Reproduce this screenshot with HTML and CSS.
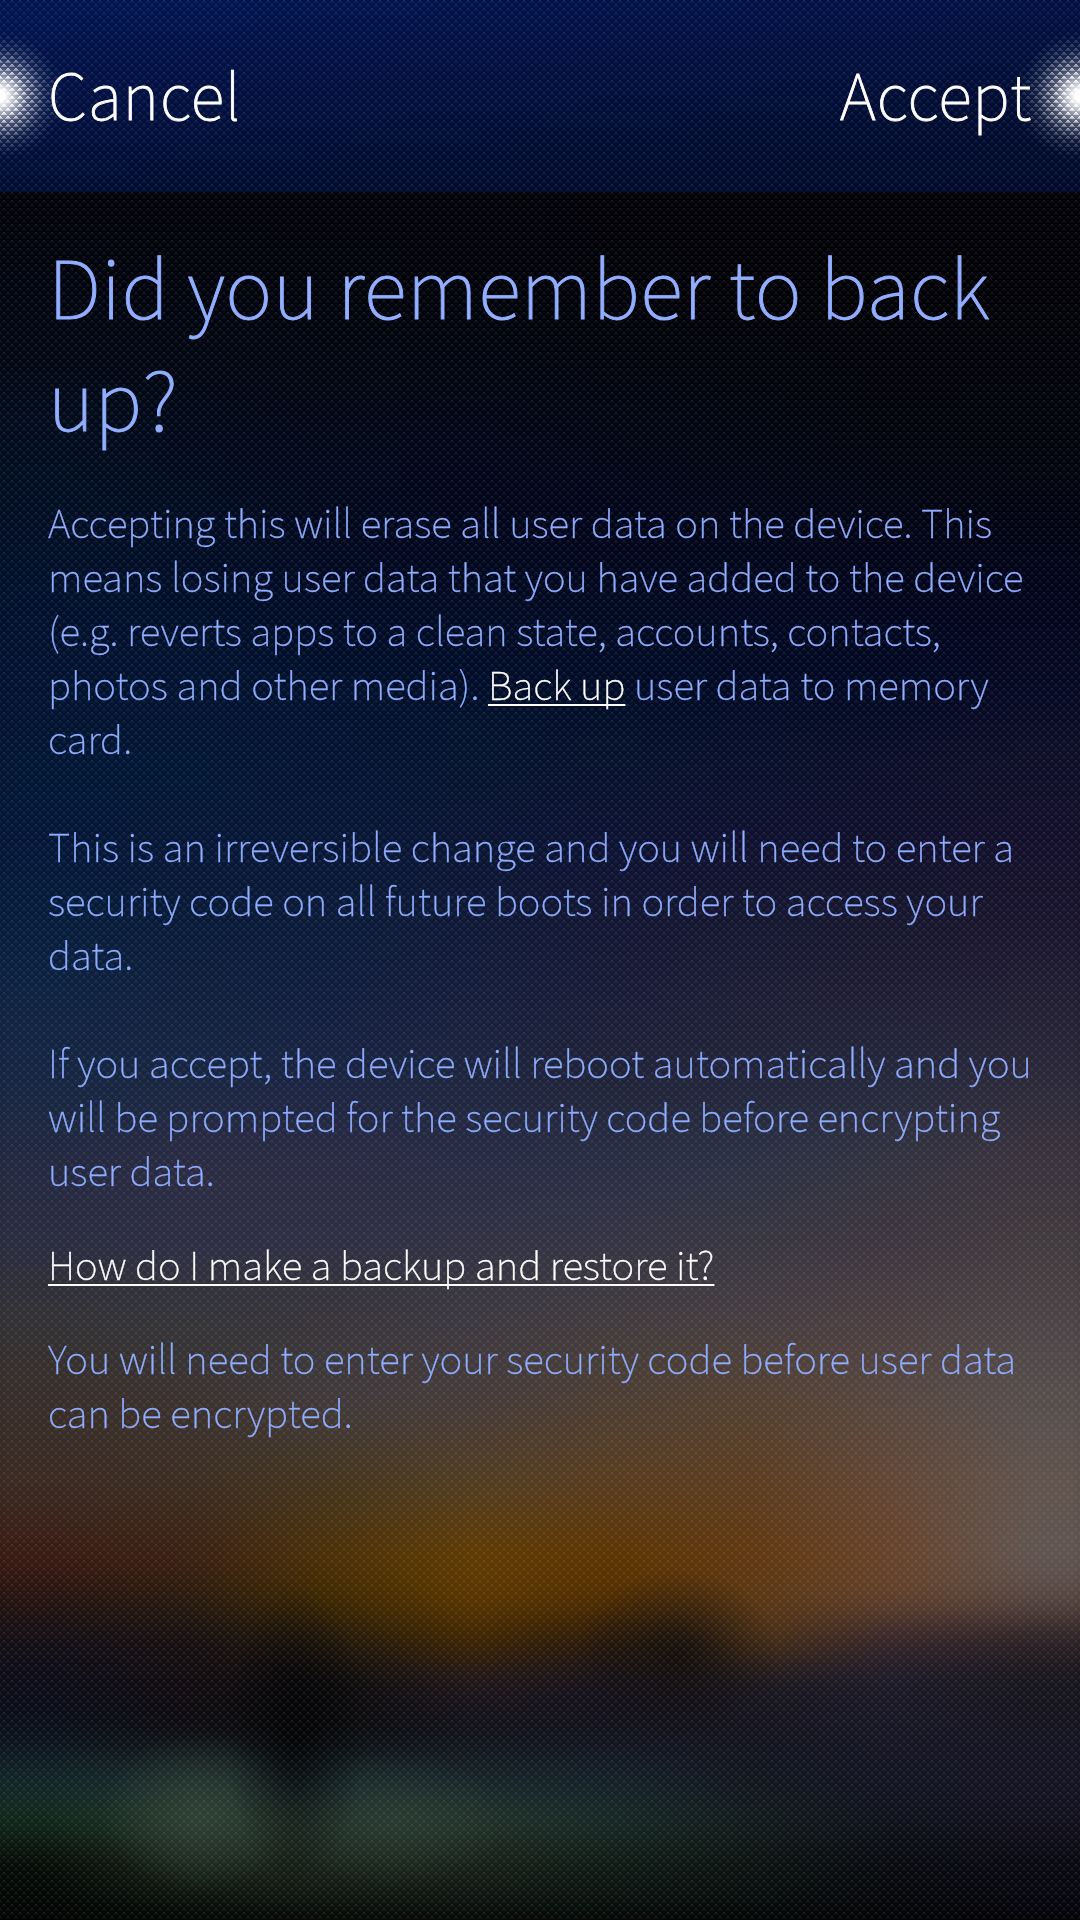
FILE: index.html
```
<!DOCTYPE html>
<html lang="en">
<head>
<meta charset="utf-8">
<title>Encrypt user data</title>
<link rel="stylesheet" href="styles.css">
</head>
<body>
<div class="wallpaper">
  <canvas id="ambience" width="1080" height="1920"></canvas>
  <div class="shade"></div>
  <div class="header-tint"></div>
  <div class="texture"></div>
</div>
<div class="page">
  <header class="dialog-header">
    <span class="glow glow-left"></span>
    <span class="glow glow-right"></span>
    <a class="action">Cancel</a>
    <a class="action">Accept</a>
  </header>
  <main class="content">
    <h1>Did you remember to back up?</h1>
    <p>Accepting this will erase all user data on the device. This means losing user data that you have added to the device (e.g. reverts apps to a clean state, accounts, contacts, photos and other media). <a class="link">Back up</a> user data to memory card.<br><br>This is an irreversible change and you will need to enter a security code on all future boots in order to access your data.<br><br>If you accept, the device will reboot automatically and you will be prompted for the security code before encrypting user data.</p>
    <p><a class="link">How do I make a backup and restore it?</a></p>
    <p>You will need to enter your security code before user data can be encrypted.</p>
  </main>
</div>
<script src="ambience.js"></script>
</body>
</html>
```
FILE: styles.css
```
* {
  box-sizing: border-box;
}

body {
  margin: 0;
  background: #000;
  color: #91aeff;
  font-family: "Noto Sans CJK SC", "Noto Sans", sans-serif;
  font-weight: 100;
}

.wallpaper {
  position: absolute;
  left: 0;
  top: 0;
  width: 1080px;
  height: 1920px;
  z-index: -1;
  overflow: hidden;
}

.wallpaper > * {
  position: absolute;
  left: 0;
  top: 0;
  width: 100%;
  height: 100%;
}

.shade {
  background:
    radial-gradient(ellipse 70px 150px at 295px 1735px, rgba(0, 0, 2, .7), rgba(0, 0, 2, .3) 50%, transparent),
    radial-gradient(ellipse 100px 85px at 678px 1655px, rgba(14, 11, 10, .8), rgba(14, 11, 10, .35) 50%, transparent),
    radial-gradient(ellipse 100px 80px at 200px 1812px, rgba(52, 72, 58, .6), transparent),
    radial-gradient(ellipse 110px 70px at 395px 1820px, rgba(48, 68, 56, .5), transparent);
}

.wallpaper .header-tint {
  height: 192px;
  background: linear-gradient(175deg, #001450, #001042 35%, #000c33 65%, #000928);
}

.texture {
  background: url("data:image/svg+xml,%3Csvg xmlns='http://www.w3.org/2000/svg' width='8' height='8' fill='%23fff' shape-rendering='crispEdges'%3E%3Cpath opacity='.1' d='M3 0h2v1h-2zM0 4h1v1h-1zM7 4h1v1h-1z'/%3E%3Cpath opacity='.055' d='M2 1h4v1h-4zM0 5h2v1h-2zM6 5h2v1h-2z'/%3E%3Cpath opacity='.03' d='M1 2h6v1h-6zM0 6h3v1h-3zM5 6h3v1h-3z'/%3E%3Cpath opacity='.01' d='M0 3h8v1h-8zM0 7h8v1h-8z'/%3E%3C/svg%3E");
}

.page {
  width: 1080px;
  height: 1920px;
  overflow: hidden;
}

.dialog-header {
  position: relative;
  display: flex;
  justify-content: space-between;
  align-items: center;
  height: 192px;
  padding: 0 48px 6px;
}

.action {
  color: #fff;
  font-size: 63px;
  line-height: 90px;
  letter-spacing: .9px;
  -webkit-text-stroke: .8px;
}

.glow {
  position: absolute;
  top: 24px;
  width: 72px;
  height: 144px;
}

.glow::before,
.glow::after {
  content: "";
  position: absolute;
  inset: 0;
}

.glow::before {
  background: radial-gradient(circle at var(--edge) 50%, #fff 5px, rgba(255, 255, 255, .7) 15px, rgba(255, 255, 255, .28) 28px, rgba(255, 255, 255, .07) 44px, transparent 60px);
}

.glow::after {
  background: radial-gradient(circle at var(--edge) 50%, #fff 18px, rgba(255, 255, 255, .6) 31px, rgba(255, 255, 255, .2) 46px, transparent 66px);
  -webkit-mask-image: url("data:image/svg+xml,%3Csvg xmlns='http://www.w3.org/2000/svg' width='8' height='8' shape-rendering='crispEdges'%3E%3Cpath d='M3 0h2v1h-2zM0 4h1v1h-1zM7 4h1v1h-1z'/%3E%3Cpath opacity='.8' d='M2 1h4v1h-4zM0 5h2v1h-2zM6 5h2v1h-2z'/%3E%3Cpath opacity='.55' d='M1 2h6v1h-6zM0 6h3v1h-3zM5 6h3v1h-3z'/%3E%3C/svg%3E");
  mask-image: url("data:image/svg+xml,%3Csvg xmlns='http://www.w3.org/2000/svg' width='8' height='8' shape-rendering='crispEdges'%3E%3Cpath d='M3 0h2v1h-2zM0 4h1v1h-1zM7 4h1v1h-1z'/%3E%3Cpath opacity='.8' d='M2 1h4v1h-4zM0 5h2v1h-2zM6 5h2v1h-2z'/%3E%3Cpath opacity='.55' d='M1 2h6v1h-6zM0 6h3v1h-3zM5 6h3v1h-3z'/%3E%3C/svg%3E");
}

.glow-left {
  --edge: 0;
  left: 0;
}

.glow-right {
  --edge: 100%;
  right: 0;
}

.content {
  display: flex;
  flex-direction: column;
  gap: 40px;
  padding: 36px 44px 0 48px;
}

h1 {
  margin: 0 0 2px;
  font-size: 80px;
  font-weight: 100;
  line-height: 112px;
  letter-spacing: .45px;
  -webkit-text-stroke: .9px;
}

p {
  margin: 0;
  font-size: 38.7px;
  line-height: 54px;
  letter-spacing: .02px;
  -webkit-text-stroke: .4px;
}

.link {
  color: #fff;
  text-decoration: underline 2px;
  text-underline-offset: 4px;
  text-decoration-skip-ink: none;
}
```
FILE: ambience.js
```
// Wallpaper colours: [y, colours at eight evenly spaced columns]
const rows = [
  [200, '000209 000209 000209 000209 000107 000107 000107 000107'],
  [280, '00040e 00030c 00030b 00020a 000208 000106 000106 000106'],
  [360, '000814 000712 00050f 00040e 00030c 00030a 000209 000209'],
  [440, '000c1e 00091a 000818 000718 000614 00040f 00030c 00030b'],
  [520, '000e24 000c22 00081e 00061c 00051a 000618 000414 000210'],
  [600, '00102c 000e28 000a24 000a22 000920 000820 00061e 00051c'],
  [680, '001230 001230 000f2c 000d2a 000b26 000924 000822 040822'],
  [760, '001634 001634 021432 04132e 06112c 080f2a 0a0e28 0e0e28'],
  [840, '041638 061636 081636 0a1432 0c1232 0e102e 100f2c 130f2b'],
  [920, '061c3c 081a38 0a1a38 0e1836 121632 151630 16162e 19142d'],
  [1000, '0e2242 0f203c 111d3d 151d3b 191c37 1d1d36 1f1d34 211e32'],
  [1080, '152541 182541 1a2442 1d243e 1f2339 21243a 24283c 2a2839'],
  [1160, '212840 2a2a42 2a2a43 262b44 282d44 2a3043 323240 3a323d'],
  [1240, '2a2b3f 2c2d43 2d2e43 303042 343343 373540 3d353f 40393d'],
  [1320, '323134 343438 383439 3c3840 413b3e 463d41 4b3e41 4b4346'],
  [1400, '382d29 3a312f 403a3c 453a3a 4c3e33 534031 564740 564e4c'],
  [1480, '392a22 3b2d22 43341e 503c22 583c20 5b3c20 624635 60524c'],
  [1560, '3a1a12 3a1f10 4c3006 603a00 5d3400 61370f 684229 605450'],
  [1600, '24130f 281a0e 3e2800 593600 512d00 593713 60402a 57453f'],
  [1640, '140f16 160f10 22180c 3e2400 28180a 4a2e14 36252a 2c2024'],
  [1680, '0c0c18 120c10 0c0b0c 20161a 16121a 1a171e 1c1a28 17151c'],
  [1730, '0a0f1a 0c0b10 0a0a0c 10101a 12111c 14131e 171624 151420'],
  [1780, '12262a 1a2a2a 16262a 162428 14202a 11161f 131523 151424'],
  [1820, '122a1c 26362a 22322a 22332a 182a26 121c1c 0f121c 11101c'],
  [1860, '060d08 1a2619 1a251c 182219 101c16 0c1412 090b10 0a0a14'],
  [1920, '010402 040806 080d08 080d0a 060c09 050808 040508 04040a']
];

const columns = 8;
const strip = document.createElement('canvas');
strip.width = columns;
strip.height = 1920;
const pen = strip.getContext('2d');
for (let c = 0; c < columns; c++) {
  const fill = pen.createLinearGradient(0, 0, 0, 1920);
  rows.forEach(([y, colours]) => fill.addColorStop(y / 1920, '#' + colours.split(' ')[c]));
  pen.fillStyle = fill;
  pen.fillRect(c, 0, 1, 1920);
}

const view = document.getElementById('ambience').getContext('2d');
view.imageSmoothingQuality = 'high';
view.filter = 'blur(12px)';
view.drawImage(strip, -20, 0, 1120, 1920);
```
